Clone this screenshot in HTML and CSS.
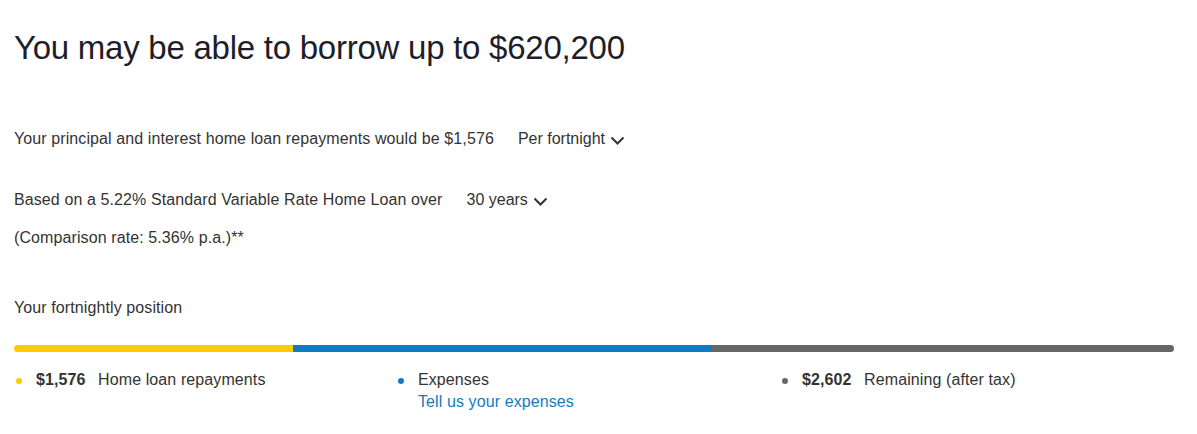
FILE: index.html
```html
<!DOCTYPE html>
<html lang="en">
<head>
  <meta charset="UTF-8" />
  <title>Borrowing power</title>
  <link rel="stylesheet" href="styles.css">
</head>
<body>
  <div class="result">
    <h1>You may be able to borrow up to $620,200</h1>

    <div class="line repay">
      <span>Your principal and interest home loan repayments would be $1,576</span>
      <button class="picker">Per fortnight
        <svg width="15" height="9" viewBox="0 0 15 9"><path d="M1.5 1.5 L7.5 7.5 L13.5 1.5" fill="none" stroke="#333" stroke-width="2"/></svg>
      </button>
    </div>

    <div class="line term">
      <span>Based on a 5.22% Standard Variable Rate Home Loan over</span>
      <button class="picker">30 years
        <svg width="15" height="9" viewBox="0 0 15 9"><path d="M1.5 1.5 L7.5 7.5 L13.5 1.5" fill="none" stroke="#333" stroke-width="2"/></svg>
      </button>
    </div>
    <p class="line comparison">(Comparison rate: 5.36% p.a.)**</p>

    <p class="line position">Your fortnightly position</p>

    <div class="bar">
      <div class="seg yellow" style="width: 24.05%"></div>
      <div class="seg blue" style="width: 36.03%"></div>
      <div class="seg grey"></div>
    </div>

    <div class="legend">
      <div class="item">
        <span class="dot yellow"></span>
        <div>
          <strong>$1,576</strong> Home loan repayments
        </div>
      </div>
      <div class="item">
        <span class="dot blue"></span>
        <div>
          Expenses
          <a href="#" class="link">Tell us your expenses</a>
        </div>
      </div>
      <div class="item">
        <span class="dot grey"></span>
        <div>
          <strong>$2,602</strong> Remaining (after tax)
        </div>
      </div>
    </div>
  </div>
</body>
</html>
```

FILE: styles.css
```css
body {
  margin: 0;
  background: #fff;
  font-family: "Liberation Sans", Arial, sans-serif;
  color: #333;
}
.result {
  padding: 28px 23px 0 14px;
}
h1 {
  margin: 0;
  font-size: 33px;
  font-weight: normal;
  color: #1e1e2a;
  line-height: 40px;
  letter-spacing: -0.25px;
}
.line {
  margin: 0;
  font-size: 16px;
  line-height: 20px;
  letter-spacing: 0.1px;
  display: flex;
  align-items: center;
}
.repay {
  margin-top: 61px;
}
.term {
  margin-top: 41px;
}
.comparison {
  margin-top: 18px;
}
.position {
  margin-top: 50px;
}
.picker {
  margin-left: 24px;
  padding: 0;
  border: none;
  background: none;
  font: inherit;
  color: #333;
  display: flex;
  align-items: center;
  gap: 5px;
}
.picker svg {
  margin-top: 2px;
}
.bar {
  margin-top: 27px;
  height: 7px;
  border-radius: 4px;
  overflow: hidden;
  display: flex;
}
.seg {
  height: 100%;
}
.seg.grey {
  flex: 1;
}
.yellow {
  background: #fc0;
}
.blue {
  background: #127bbf;
}
.grey {
  background: #666;
}
.legend {
  margin-top: 17px;
  display: grid;
  grid-template-columns: 382px 384px 1fr;
  font-size: 16px;
  line-height: 22px;
  letter-spacing: 0.1px;
}
.item {
  display: flex;
  align-items: flex-start;
}
.dot {
  width: 6px;
  height: 6px;
  border-radius: 50%;
  margin: 9px 14px 0 2px;
  flex-shrink: 0;
}
.item strong {
  margin-right: 8px;
}
.link {
  display: block;
  color: #127bbf;
  text-decoration: none;
}
```
